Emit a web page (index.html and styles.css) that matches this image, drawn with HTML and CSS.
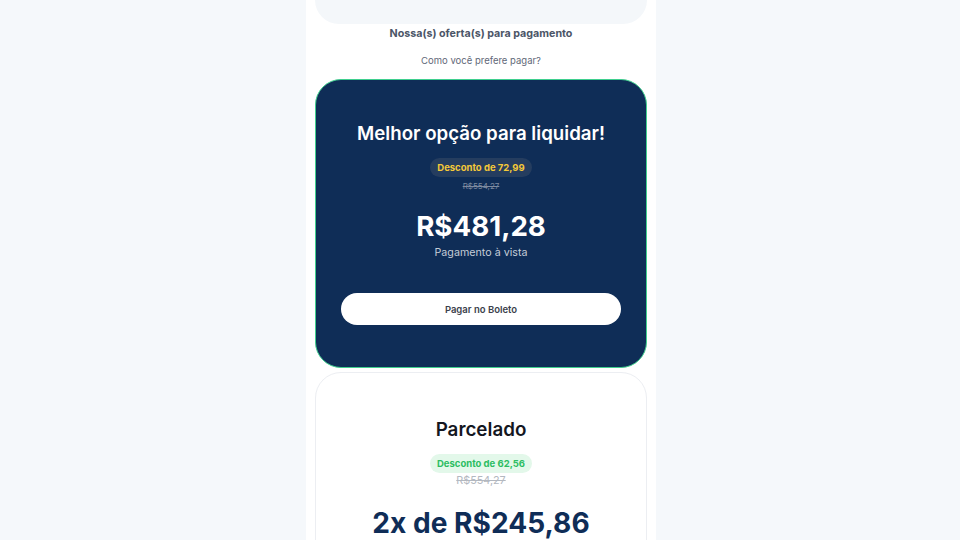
FILE: index.html
```html
<!DOCTYPE html>
<html lang="pt-BR">
<head>
<meta charset="utf-8">
<title>Ofertas</title>
<link rel="stylesheet" href="styles.css">
</head>
<body>
<main class="column">
  <div class="top-card"></div>
  <h2 class="heading">Nossa(s) oferta(s) para pagamento</h2>
  <p class="subheading">Como você prefere pagar?</p>

  <section class="offer offer-dark">
    <h3 class="offer-title">Melhor opção para liquidar!</h3>
    <span class="badge badge-yellow">Desconto de 72,99</span>
    <span class="old-price old-price-dark">R$554,27</span>
    <div class="price">R$481,28</div>
    <div class="price-note">Pagamento à vista</div>
    <button class="pay-btn">Pagar no Boleto</button>
  </section>

  <section class="offer offer-light">
    <h3 class="offer-title">Parcelado</h3>
    <span class="badge badge-green">Desconto de 62,56</span>
    <span class="old-price old-price-light">R$554,27</span>
    <div class="price">2x de R$245,86</div>
  </section>
</main>
</body>
</html>
```

FILE: styles.css
```css
* { box-sizing: border-box; }
html, body { margin: 0; padding: 0; }
body {
  background: #f5f8fb;
  font-family: Inter, "Noto Sans", "Liberation Sans", sans-serif;
  height: 540px;
  overflow: hidden;
}
.column {
  width: 350px;
  margin: 0 0 0 306px;
  background: #ffffff;
  height: 540px;
  overflow: hidden;
  padding: 0 9px;
  display: flex;
  flex-direction: column;
  align-items: stretch;
}
.top-card {
  flex: none;
  height: 24px;
  background: #f4f7fa;
  border-radius: 0 0 24px 24px;
}
.heading {
  margin: 0;
  padding-top: 1px;
  font-size: 10.7px;
  line-height: 18px;
  font-weight: 700;
  color: #4b5567;
  text-align: center;
}
.subheading {
  margin: 10px 0 0;
  font-size: 9.5px;
  line-height: 16px;
  color: #5f6878;
  text-align: center;
}
.offer {
  flex: none;
  display: flex;
  flex-direction: column;
  align-items: center;
  border-radius: 26px;
  text-align: center;
}
.offer-dark {
  margin-top: 10px;
  background: #0f2d57;
  border: 1px solid #3fcf8e;
  padding: 40px 25px 42px;
}
.offer-light {
  margin-top: 4px;
  background: #ffffff;
  border: 1px solid #eceef2;
  padding: 43px 25px 0;
  height: 200px;
}
.offer-title {
  margin: 0;
  font-size: 18.7px;
  line-height: 28px;
  font-weight: 600;
}
.offer-dark .offer-title { color: #ffffff; }
.offer-light .offer-title { color: #14171f; font-size: 18.8px; }
.badge {
  margin-top: 10px;
  height: 19px;
  line-height: 19px;
  padding: 0 7px;
  border-radius: 10px;
  font-size: 9.5px;
  font-weight: 700;
}
.badge-yellow {
  background: #253d5f;
  color: #f5c938;
}
.badge-green {
  background: #e3f8ea;
  color: #2cbd62;
}
.old-price {
  text-decoration: line-through;
}
.old-price-dark {
  margin-top: 3px;
  font-size: 8px;
  line-height: 12px;
  color: #7d8aa0;
}
.old-price-light {
  margin-top: 1px;
  font-size: 10.8px;
  line-height: 14px;
  color: #b3b8c0;
}
.price {
  font-size: 27.7px;
  line-height: 36px;
  font-weight: 700;
}
.offer-dark .price { margin-top: 16px; color: #ffffff; }
.offer-light .price { margin-top: 17px; color: #0f2d57; font-size: 28.1px; }
.price-note {
  margin-top: 1px;
  font-size: 10.7px;
  line-height: 16px;
  color: #c4ccd8;
}
.pay-btn {
  margin-top: 32px;
  width: 100%;
  height: 32px;
  border: none;
  border-radius: 16px;
  background: #ffffff;
  font-family: inherit;
  font-size: 9.5px;
  font-weight: 600;
  color: #3b414c;
}
```
